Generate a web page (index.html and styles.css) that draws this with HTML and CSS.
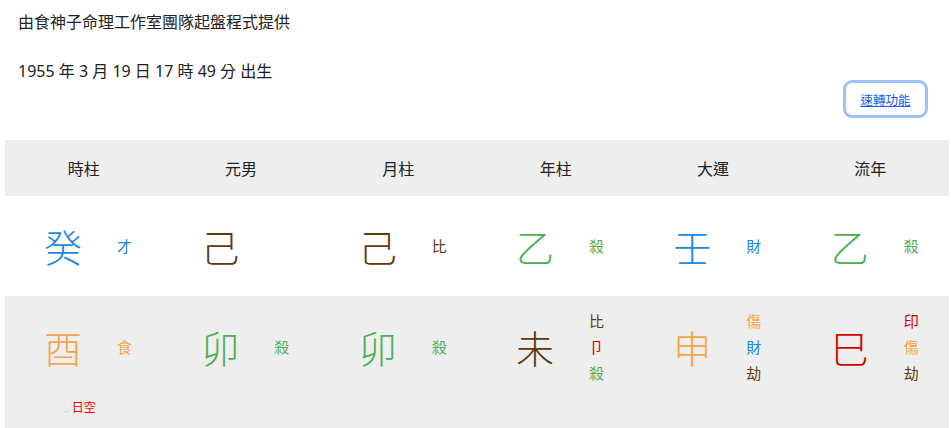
FILE: index.html
```html
<!DOCTYPE html>
<html lang="zh-Hant">
<head>
<meta charset="utf-8">
<title>命盤</title>
<link rel="stylesheet" href="styles.css">
</head>
<body>
<div class="intro">
  <div class="line first">由食神子命理工作室團隊起盤程式提供</div>
  <div class="line">1955 年 3 月 19 日 17 時 49 分 出生</div>
</div>
<div class="tools">
  <button class="quick" type="button"><a href="#" class="quick-link">速轉功能</a></button>
</div>
<div class="chart">
  <div class="row head">
    <div class="hcell">時柱</div>
    <div class="hcell">元男</div>
    <div class="hcell">月柱</div>
    <div class="hcell">年柱</div>
    <div class="hcell">大運</div>
    <div class="hcell">流年</div>
  </div>
  <div class="row stems">
    <div class="cell"><div class="group"><span class="big water">癸</span><div class="labels"><span class="water">才</span></div></div></div>
    <div class="cell"><div class="group"><span class="big earth">己</span><div class="labels"></div></div></div>
    <div class="cell"><div class="group"><span class="big earth">己</span><div class="labels"><span class="earth">比</span></div></div></div>
    <div class="cell"><div class="group"><span class="big wood">乙</span><div class="labels"><span class="wood">殺</span></div></div></div>
    <div class="cell"><div class="group"><span class="big water">壬</span><div class="labels"><span class="water">財</span></div></div></div>
    <div class="cell"><div class="group"><span class="big wood">乙</span><div class="labels"><span class="wood">殺</span></div></div></div>
  </div>
  <div class="row branches">
    <div class="cell"><div class="group tall"><span class="big metal">酉</span><div class="labels"><span class="metal">食</span></div></div><div class="note">日空</div></div>
    <div class="cell"><div class="group tall"><span class="big wood">卯</span><div class="labels"><span class="wood">殺</span></div></div></div>
    <div class="cell"><div class="group tall"><span class="big wood">卯</span><div class="labels"><span class="wood">殺</span></div></div></div>
    <div class="cell"><div class="group tall"><span class="big earth">未</span><div class="labels"><span class="earth">比</span><span class="fire">卩</span><span class="wood">殺</span></div></div></div>
    <div class="cell"><div class="group tall"><span class="big metal">申</span><div class="labels"><span class="metal">傷</span><span class="water">財</span><span class="earth">劫</span></div></div></div>
    <div class="cell"><div class="group tall"><span class="big fire">巳</span><div class="labels"><span class="fire">印</span><span class="metal">傷</span><span class="earth">劫</span></div></div></div>
  </div>
</div>
</body>
</html>
```

FILE: styles.css
```css
html, body {
  margin: 0;
  padding: 0;
  background: #fff;
}
body {
  font-family: "Noto Sans", "Noto Sans CJK TC", sans-serif;
  color: #222;
}
.intro {
  padding: 11px 0 0 18px;
}
.line {
  font-size: 16px;
  line-height: 22px;
}
.line.first {
  margin-bottom: 27px;
}
.tools {
  display: flex;
  justify-content: flex-end;
  padding-right: 23px;
  margin-top: -2px;
}
.quick {
  box-sizing: border-box;
  width: 85px;
  height: 38px;
  border: 3px solid #9ec3fb;
  border-radius: 9px;
  background: #fff;
  padding: 0;
  display: flex;
  align-items: center;
  justify-content: center;
}
.quick-link {
  font-family: "Noto Sans CJK TC", sans-serif;
  font-size: 12.5px;
  color: #1a5cf0;
  text-decoration: underline;
}
.chart {
  margin: 22px 2px 0 5px;
}
.row {
  display: grid;
  grid-template-columns: repeat(6, 1fr);
}
.head {
  background: #eeeeee;
  height: 56px;
  align-items: center;
}
.hcell {
  text-align: center;
  font-family: "Noto Sans CJK TC", sans-serif;
  font-size: 16px;
  color: #222;
}
.stems {
  height: 100px;
  align-items: center;
  background: #fff;
}
.branches {
  background: #eeeeee;
  height: 132px;
  box-sizing: border-box;
  padding-top: 12px;
  align-items: start;
}
.cell {
  display: flex;
  flex-direction: column;
}
.group {
  display: flex;
  align-items: center;
  padding-left: 39px;
}
.group.tall {
  height: 78px;
}
.big {
  font-family: "Noto Sans CJK TC", sans-serif;
  font-size: 38px;
  line-height: 1;
  width: 38px;
  font-weight: 300;
}
.labels {
  display: flex;
  flex-direction: column;
  margin-left: 35px;
  font-family: "Noto Sans CJK TC", sans-serif;
  font-size: 15px;
  line-height: 26px;
}
.note {
  text-align: center;
  margin-top: 12px;
  font-family: "Noto Sans CJK TC", sans-serif;
  font-size: 12px;
  line-height: 18px;
  color: #ff0000;
}
.water { color: #1e88e5; }
.earth { color: #5d3a0c; }
.wood { color: #4caf50; }
.metal { color: #f6a54a; }
.fire { color: #d50000; }
```
